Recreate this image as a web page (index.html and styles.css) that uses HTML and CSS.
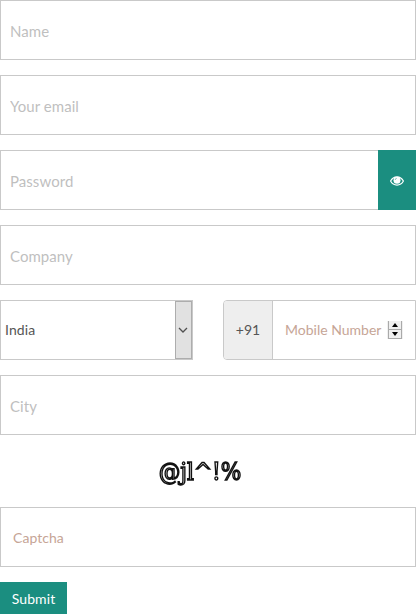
FILE: index.html
```
<!DOCTYPE html>
<html lang="en">
<head>
<meta charset="utf-8">
<title>Sign up</title>
<link rel="stylesheet" href="styles.css">
</head>
<body>
<form class="signup">
  <input class="field" type="text" placeholder="Name">
  <input class="field" type="email" placeholder="Your email">
  <div class="password">
    <input class="field" type="password" placeholder="Password">
    <button class="reveal" type="button" aria-label="Show password">
      <svg width="14" height="10" viewBox="0 0 14 10"><path d="M.6 5C3.5-.6 10.5-.6 13.4 5 10.5 10.4 3.5 10.4.6 5Z" fill="none" stroke="#fff" stroke-width="1.2"/><circle cx="7" cy="4.3" r="3.5" fill="#fff"/><path d="M5.2 4Q5.2 2.4 6.8 2.3" fill="none" stroke="#1b8e80" stroke-width=".5"/></svg>
    </button>
  </div>
  <input class="field" type="text" placeholder="Company">
  <div class="phone">
    <div class="country">
      <span class="country-name">India</span>
      <span class="country-arrow"><svg width="10" height="6" viewBox="0 0 10 6"><path d="M1 1l4 4 4-4" fill="none" stroke="#505050" stroke-width="1.3"/></svg></span>
    </div>
    <div class="mobile">
      <span class="prefix">+91</span>
      <div class="number">
        <input class="number-input" type="text" placeholder="Mobile Number">
        <span class="spinner">
          <span class="step"><svg width="6" height="4" viewBox="0 0 6 4"><path d="M3 0l3 4H0z"/></svg></span>
          <span class="step"><svg width="6" height="4" viewBox="0 0 6 4"><path d="M3 4l3-4H0z"/></svg></span>
        </span>
      </div>
    </div>
  </div>
  <input class="field" type="text" placeholder="City">
  <div class="challenge">@jl^!%</div>
  <input class="field answer" type="text" placeholder="Captcha">
  <button class="submit" type="button">Submit</button>
</form>
</body>
</html>
```
FILE: styles.css
```
* { box-sizing: border-box; }
body { margin: 0; background: #fff; font-family: Lato, sans-serif; overflow: hidden; }
input, button { font-family: inherit; margin: 0; outline: 0; border-radius: 0; }
svg { display: block; }
.signup { display: flex; flex-direction: column; gap: 15px; }
.field {
  width: 100%;
  height: 60px;
  padding: 1px 9px 0;
  border: 1px solid #c9c9c9;
  background: #fff;
  font-size: 15px;
  letter-spacing: 0.05px;
}
.field::placeholder { color: #bfbfbf; opacity: 1; }
.password { display: flex; }
.password .field { flex: 1; min-width: 0; border-right: 0; }
.reveal {
  display: flex;
  align-items: center;
  justify-content: center;
  width: 38px;
  padding: 2px 0 0;
  border: 0;
  background: #1b8e80;
}
.phone { display: grid; grid-template-columns: 193px 193px; gap: 30px; height: 60px; }
.country {
  display: flex;
  align-items: center;
  border: 1px solid #c9c9c9;
  color: #555;
  font-size: 14px;
}
.country-name { flex: 1; padding: 0 0 1px 4px; letter-spacing: 0.1px; }
.country-arrow {
  display: flex;
  align-items: center;
  justify-content: center;
  width: 17px;
  height: 58px;
  padding-right: 2px;
  border: 1px solid #adadad;
  background: #e1e1e1;
}
.mobile { display: flex; border: 1px solid #c9c9c9; border-radius: 4px 0 0 4px; overflow: hidden; }
.prefix {
  display: flex;
  flex: none;
  align-items: center;
  justify-content: center;
  width: 49px;
  padding-bottom: 1px;
  border-right: 1px solid #c9c9c9;
  background: #eee;
  color: #555;
  font-size: 14px;
}
.number { display: flex; flex: 1; min-width: 0; align-items: center; padding: 0 12px; }
.number-input { flex: 1; min-width: 0; padding: 0 0 1px; border: 0; font-size: 14px; }
.number-input::placeholder, .answer::placeholder { color: #c6a596; opacity: 1; }
.spinner { display: flex; flex: none; flex-direction: column; width: 16px; height: 18px; background: #f0f0f0; }
.step {
  display: flex;
  flex: 1;
  align-items: center;
  justify-content: center;
  margin: 0 1px;
  border: 1px solid #aaa;
  border-top: 0;
}
.challenge {
  height: 42px;
  padding: 1px 16px 0 0;
  line-height: 42px;
  text-align: center;
  color: #fff;
  font-family: "DejaVu Serif", serif;
  font-stretch: condensed;
  font-size: 24px;
  -webkit-text-stroke: 1.4px #111;
  will-change: transform;
}
.answer { padding: 1px 12px 0; font-size: 14px; }
.submit { width: 67px; height: 32px; padding: 1px 0 0; border: 0; background: #1b8e80; color: #fff; font-size: 14px; letter-spacing: 0.1px; }
```
